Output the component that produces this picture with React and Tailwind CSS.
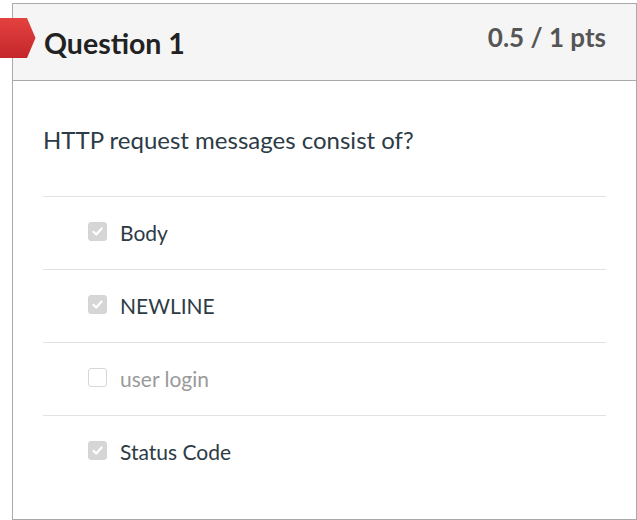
const options = [
  { label: "Body", checked: true },
  { label: "NEWLINE", checked: true },
  { label: "user login", checked: false },
  { label: "Status Code", checked: true },
];

function CheckBox({ checked }) {
  return (
    <span
      className={`flex h-[19px] w-[19px] items-center justify-center rounded-[3px] border ${
        checked ? "border-[#d4d4d4] bg-[#d6d6d6]" : "border-[#d8d8d8] bg-white"
      }`}
    >
      {checked && (
        <svg width="13" height="13" viewBox="0 0 12 12">
          <path
            d="M2.2 6.3 L4.8 8.8 L9.8 3.2"
            fill="none"
            stroke="white"
            strokeWidth="2"
            strokeLinecap="round"
            strokeLinejoin="round"
          />
        </svg>
      )}
    </span>
  );
}

export default function App() {
  return (
    <div className="relative h-[520px] w-[637px] bg-white pl-[12px] pt-[3px] font-['Lato',sans-serif]">
      <div className="flex h-[517px] w-[625px] flex-col border border-[#aaaaaa]">
        <div className="flex h-[77px] shrink-0 justify-between border-b border-[#aaaaaa] bg-[#f5f5f5] pl-[31px] pr-[30px]">
          <h2 className="pt-[21px] text-[28.5px] font-bold leading-[36px] text-[#222222]">Question 1</h2>
          <span className="pt-[16px] text-[26px] font-bold leading-[34px] text-[#555555]">0.5 / 1 pts</span>
        </div>
        <div className="px-[30px]">
          <p className="pt-[43px] pb-[40px] text-[24px] leading-[32px] text-[#2d3b45]">
            HTTP request messages consist of?
          </p>
          {options.map((opt) => (
            <div
              key={opt.label}
              className="flex h-[73px] items-center gap-[13px] border-t border-[#e2e2e2] pl-[45px]"
            >
              <span className="-mt-[3px]">
                <CheckBox checked={opt.checked} />
              </span>
              <span
                className={`text-[21px] leading-[28px] ${
                  opt.checked ? "text-[#2d3b45]" : "text-[#9a9a9a]"
                }`}
              >
                {opt.label}
              </span>
            </div>
          ))}
        </div>
      </div>
      <svg
        className="absolute left-0 top-[18px]"
        width="36"
        height="40"
        viewBox="0 0 36 40"
      >
        <defs>
          <linearGradient id="tag" x1="0" y1="0" x2="0" y2="1">
            <stop offset="0" stopColor="#e3423f" />
            <stop offset="1" stopColor="#c4262a" />
          </linearGradient>
        </defs>
        <path d="M0 0 H27 L35.5 20 L27 40 H0 Z" fill="url(#tag)" />
      </svg>
    </div>
  );
}
